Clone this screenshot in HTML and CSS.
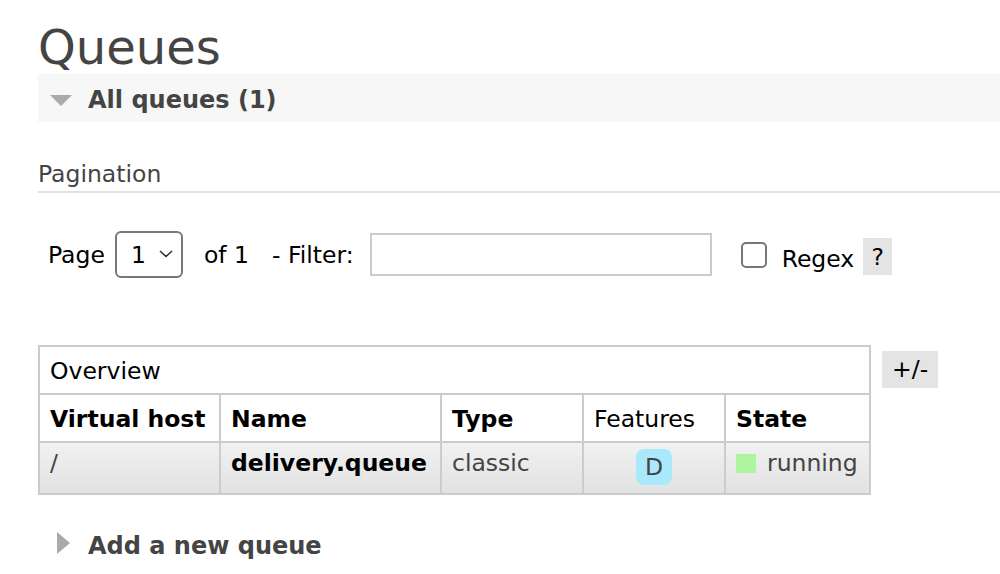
FILE: index.html
```html
<!DOCTYPE html>
<html lang="en">
<head>
    <meta charset="UTF-8">
    <meta name="viewport" content="width=device-width, initial-scale=1.0">
    <title>RabbitMQ Management - Queues</title>
    <link rel="stylesheet" href="styles.css">
</head>
<body>

    <h1>Queues</h1>

    <div class="section">
        <h2 class="section-title section-open">
            <span class="arrow-down"></span>All queues (1)
        </h2>

        <div class="section-body">
            <h3 class="pagination-title">Pagination</h3>

            <div class="filter-row">
                <label for="page" class="page-label">Page</label>
                <div class="select-wrap">
                    <select id="page" class="page-select">
                        <option>1</option>
                    </select>
                    <svg class="chevron" width="14" height="8" viewBox="0 0 14 8">
                        <polyline points="1,1 7,6.5 13,1" fill="none" stroke="#333" stroke-width="1.6"/>
                    </svg>
                </div>
                <span class="of-label">of 1</span>
                <label for="filter" class="filter-label">- Filter:</label>
                <input type="text" id="filter" class="filter-input">
                <label class="regex">
                    <input type="checkbox" class="regex-box">
                    <span class="regex-text">Regex</span>
                </label>
                <span class="help">?</span>
            </div>

            <div class="table-wrap">
                <table class="list">
                    <colgroup>
                        <col class="col-vhost">
                        <col class="col-name">
                        <col class="col-type">
                        <col class="col-features">
                        <col class="col-state">
                    </colgroup>
                    <thead>
                        <tr>
                            <th colspan="5" class="group-head">Overview</th>
                        </tr>
                        <tr>
                            <th>Virtual host</th>
                            <th>Name</th>
                            <th>Type</th>
                            <th class="plain">Features</th>
                            <th>State</th>
                        </tr>
                    </thead>
                    <tbody>
                        <tr>
                            <td>/</td>
                            <td><a href="#" class="queue-link">delivery.queue</a></td>
                            <td>classic</td>
                            <td class="features"><abbr class="badge" title="durable: true">D</abbr></td>
                            <td><span class="status-green"></span>running</td>
                        </tr>
                    </tbody>
                </table>
                <span class="toggle-cols">+/-</span>
            </div>
        </div>
    </div>

    <div class="section">
        <h2 class="section-title section-closed">
            <span class="arrow-right"></span>Add a new queue
        </h2>
    </div>

</body>
</html>
```

FILE: styles.css
```css
body {
    font-family: Verdana, "DejaVu Sans", sans-serif;
    font-size: 23.5px;
    line-height: 28px;
    color: #000;
    margin: 0;
    padding: 0 0 0 38px;
}

h1 {
    font-size: 48px;
    line-height: 54px;
    font-weight: normal;
    color: #444;
    margin: 20px 0 0 0;
}

/* collapsible sections */
.section-title {
    display: flex;
    font-size: 24px;
    line-height: 28px;
    font-weight: bold;
    color: #444;
    margin: 0;
}

.section-open {
    align-items: center;
    height: 48px;
    box-sizing: border-box;
    padding: 4px 0 0 12px;
    background-color: #f7f7f7;
}

.section-closed {
    align-items: flex-start;
    margin-top: 37px;
    padding-left: 19px;
}

.arrow-down {
    width: 0;
    height: 0;
    border-left: 11.5px solid transparent;
    border-right: 11.5px solid transparent;
    border-top: 11px solid #aaa;
    margin: 0 16px 0 0;
}

.arrow-right {
    width: 0;
    height: 0;
    border-top: 11px solid transparent;
    border-bottom: 11px solid transparent;
    border-left: 13px solid #aaa;
    margin-right: 18px;
}

.pagination-title {
    font-size: 23.5px;
    font-weight: normal;
    color: #444;
    margin: 38px 0 0 0;
    padding-bottom: 3px;
    border-bottom: 2px solid #e0e0e0;
}

/* pagination + filter row */
.filter-row {
    display: flex;
    align-items: center;
    margin-top: 38px;
    padding-left: 10px;
}

.page-label {
    margin-right: 10px;
}

.select-wrap {
    position: relative;
    margin-right: 21px;
}

.page-select {
    appearance: none;
    -webkit-appearance: none;
    width: 68px;
    height: 47px;
    box-sizing: border-box;
    border: 2px solid #777;
    border-radius: 6px;
    background-color: #fff;
    padding: 0 0 0 14px;
    font-family: inherit;
    font-size: 23.5px;
    color: #000;
    display: block;
}

.chevron {
    position: absolute;
    right: 10px;
    top: 19px;
    pointer-events: none;
}

.of-label {
    margin-right: 23px;
}

.filter-label {
    margin-right: 16px;
}

.filter-input {
    width: 342px;
    height: 43px;
    box-sizing: border-box;
    border: 2px solid #ccc;
    margin: 0 29px 0 0;
    font-family: inherit;
    font-size: 23.5px;
}

.regex {
    display: flex;
    align-items: center;
}

.regex-box {
    appearance: none;
    -webkit-appearance: none;
    width: 26px;
    height: 26px;
    margin: 0 15px 0 0;
    border: 2px solid #777;
    border-radius: 5px;
    background-color: #fff;
}

.regex-text {
    padding-top: 8px;
}

.help {
    margin: 4px 0 0 9px;
    width: 29px;
    height: 37px;
    box-sizing: border-box;
    padding-top: 5px;
    text-align: center;
    background-color: #e4e4e4;
}

/* queue table */
.table-wrap {
    display: flex;
    align-items: flex-start;
    margin-top: 67px;
}

table.list {
    border-collapse: collapse;
    table-layout: fixed;
    width: 831px;
    border: 2px solid #ccc;
}

.col-vhost { width: 181px; }
.col-name { width: 221px; }
.col-type { width: 142px; }
.col-features { width: 142px; }
.col-state { width: 145px; }

table.list th {
    text-align: left;
    padding: 10px 10px 8px 10px;
    border: 2px solid #ccc;
    white-space: nowrap;
}

table.list th.group-head,
table.list th.plain {
    font-weight: normal;
}

table.list td {
    padding: 6px 10px 8px 10px;
    border: 2px solid #ccc;
    vertical-align: top;
    color: #444;
    white-space: nowrap;
    background: linear-gradient(#f1f1f1, #e2e2e2);
}

.queue-link {
    color: #000;
    font-weight: bold;
    text-decoration: none;
}

td.features {
    text-align: center;
}

.badge {
    display: inline-block;
    line-height: 24px;
    padding: 6px 9px;
    border-radius: 8px;
    background-color: #aae8fc;
    color: #444;
    text-decoration: none;
}

.status-green {
    display: inline-block;
    width: 20px;
    height: 19px;
    margin-right: 11px;
    vertical-align: -2px;
    background-color: #aef5a0;
}

.toggle-cols {
    margin: 6px 0 0 11px;
    padding: 4px 10px;
    line-height: 29px;
    background-color: #e4e4e4;
}
```
